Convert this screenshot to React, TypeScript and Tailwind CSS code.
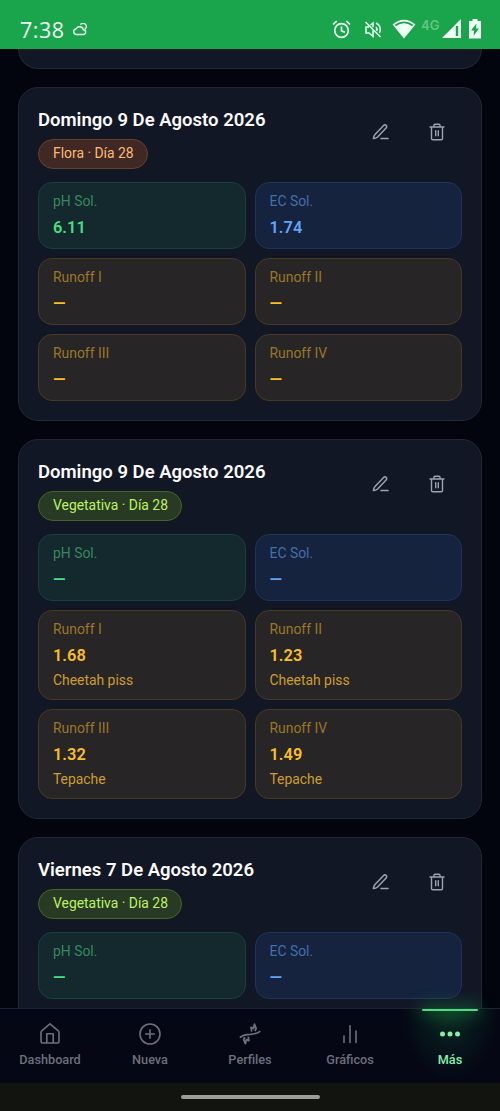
import React from "react";

type Tone = "green" | "blue" | "amber";
type Metric = { label: string; value: string; tone: Tone; note?: string };

const tones: Record<Tone, { box: string; label: string; value: string; note: string }> = {
  green: { box: "bg-[#13292d] border-[#184039]", label: "text-[#36885a]", value: "text-[#4ade80]", note: "" },
  blue: { box: "bg-[#15233e] border-[#1c3557]", label: "text-[#426faa]", value: "text-[#60a5fa]", note: "" },
  amber: { box: "bg-[#272525] border-[#4a3820]", label: "text-[#9a772a]", value: "text-[#fbbf24]", note: "text-[#cc9d34]" },
};

function Cell({ m }: { m: Metric }) {
  const t = tones[m.tone];
  return (
    <div className={`rounded-[14px] border pl-[14px] pt-[8px] ${m.note ? "h-[90px]" : "h-[67px]"} ${t.box}`}>
      <div className={`text-[13.9px] leading-[20px] ${t.label}`}>{m.label}</div>
      <div className={`mt-[4px] text-[16.4px] font-semibold leading-[25px] ${t.value}`}>{m.value}</div>
      {m.note && <div className={`mt-[2px] text-[13.9px] leading-[20px] ${t.note}`}>{m.note}</div>}
    </div>
  );
}

function Entry({ title, stage, metrics }: { title: string; stage: "Flora" | "Vegetativa"; metrics: Metric[] }) {
  const badge = stage === "Flora" ? "bg-[#402825] border-[#694027] text-[#fdba74]" : "bg-[#283a23] border-[#466426] text-[#bef264]";
  return (
    <article className="min-h-[240px] shrink-0 rounded-[20px] border border-[#222735] bg-[#121726] px-[19px] pb-[19px] pt-[18px]">
      <header className="flex h-[76px] justify-between">
        <div>
          <h2 className="text-[18.53px] font-semibold leading-[28px] text-[#fafafa]">{title}</h2>
          <span className={`mt-[5px] flex h-[30px] w-fit items-center rounded-full border pb-[2px] pl-[14px] pr-[13px] text-[13.9px] leading-[20px] whitespace-pre ${badge}`}>{`${stage} · Día 28`}</span>
        </div>
        <div className="flex h-[51px] items-center gap-[38px] pr-[16px] text-[#9ca3af]">
          <button aria-label="Editar">
            <svg width="18" height="18" viewBox="0 0 18 18" fill="none" stroke="currentColor" strokeWidth="1.5" strokeLinecap="round" strokeLinejoin="round">
              <path d="M11.6 2.4a1.7 1.7 0 0 1 2.5 0 1.7 1.7 0 0 1 0 2.5L5.6 14c-1 .9-2.4 1.5-4.2 1.6.1-1.8.7-3.2 1.6-4.2ZM9 15.6h7" />
            </svg>
          </button>
          <button aria-label="Eliminar">
            <svg width="18" height="18" viewBox="0 0 18 18" fill="none" stroke="currentColor" strokeWidth="1.4" strokeLinecap="round" strokeLinejoin="round">
              <path d="M2 4h14M3.5 4v11.4c0 .9.4 1.3 1.3 1.3h8.4c.9 0 1.3-.4 1.3-1.3V4M6 4V2.2c0-.6.4-1 1-1h4c.6 0 1 .4 1 1V4M7.7 7.8v5M10.3 7.8v5" />
            </svg>
          </button>
        </div>
      </header>
      <div className="grid grid-cols-2 gap-[9px]">
        {metrics.map((m) => <Cell key={m.label} m={m} />)}
      </div>
    </article>
  );
}

const sol = (ph: string, ec: string): Metric[] => [
  { label: "pH Sol.", value: ph, tone: "green" },
  { label: "EC Sol.", value: ec, tone: "blue" },
];

const runoffs = (values: string[], notes: string[] = []): Metric[] =>
  ["I", "II", "III", "IV"].map((n, i) => ({ label: `Runoff ${n}`, value: values[i], note: notes[i], tone: "amber" }));

function StatusBar() {
  return (
    <div className="flex h-[49px] shrink-0 items-center bg-[#1aa54c] pt-[10px] text-[#effff4]">
      <span className="ml-[20px] w-[45px] font-['Open_Sans',sans-serif] text-[21.5px] leading-[24px] tracking-[0.5px]">7:38</span>
      <svg className="ml-[7px]" width="16" height="14" viewBox="0 0 16 14" fill="none" stroke="currentColor" strokeWidth="1.4">
        <path d="M4 11.5h7.2a2.4 2.4 0 0 0 .1-4.8A3.8 3.8 0 0 0 4.2 5.8 2.9 2.9 0 0 0 4 11.5ZM8.5 1.7a3.2 3.2 0 1 1 4.4 4.5" />
      </svg>
      <div className="ml-auto flex h-[24px] items-center pr-[19px]">
        <svg width="19" height="20" viewBox="0 0 19 20" fill="none" stroke="currentColor" strokeWidth="1.7">
          <circle cx="9.5" cy="10.5" r="6.8" /><path d="M9.5 6.5v4.4l3.4 1.3M1 4.3 4.7 1.2M18 4.3l-3.7-3.1" />
        </svg>
        <svg className="ml-[13px]" width="19" height="20" viewBox="0 0 19 20" fill="none" stroke="currentColor" strokeWidth="1.5">
          <path d="M1.5 2l15 15M5 7H2v6h3l4 3.4V10.5M6.5 5 9 3V7M12 7a4 4 0 0 1 .8 4M12 3a7.2 7.2 0 0 1 3.5 10" />
        </svg>
        <svg className="-mt-[2px] ml-[9px]" width="24" height="20" viewBox="0 0 24 20">
          <path d="M12 19.5.6 5.4C7.5-.9 16.5-.9 23.4 5.4Z" fill="currentColor" />
          <path d="M3.3 6.6C8.8 2.6 15.2 2.6 20.7 6.6" fill="none" stroke="#1aa54c" strokeWidth="1.8" />
        </svg>
        <span className="-mt-[8px] ml-[5px] w-[20px] font-[Inter,sans-serif] text-[13px] font-semibold leading-none text-[#62c581]">4G</span>
        <svg className="-mt-[1px] ml-[1px]" width="19" height="20" viewBox="0 0 19 20">
          <path d="M19 0v19H0Z" fill="currentColor" /><path d="M13.8 7h2.4v10h-2.4Z" fill="#1aa54c" />
        </svg>
        <svg className="-mt-[1px] ml-[8px]" width="12" height="20" viewBox="0 0 12 20">
          <path d="M3.5 0h5v2H12v17.5H0V2h3.5Z" fill="currentColor" /><path d="M7.5 4.5 2 11.5h3.2L4.5 17l5.5-7.5H7Z" fill="#1aa54c" />
        </svg>
      </div>
    </div>
  );
}

const icons: Record<string, React.ReactNode> = {
  Dashboard: <path d="M3 10.3v9.2c0 1 .6 1.5 1.5 1.5h15c.9 0 1.5-.5 1.5-1.5v-9.2c0-.6-.2-1-.7-1.4L12 1.8 3.7 8.9c-.5.4-.7.8-.7 1.4ZM8.8 21v-9.2h6.4V21" />,
  Nueva: <><circle cx="12" cy="12" r="10" /><path d="M12 7.7v8.6M7.7 12h8.6" /></>,
  Perfiles: <path strokeWidth="1.8" d="M2.4 15.2c2.6-2.2 5.8-2.8 9.6-2.9 3.8-.2 7-.7 9.7-2.7M13.6 8.8l-.6-3.4 2.4 1.1 1.1-4.3 1.6 4.2-.8 2M10.3 15.4l.6 3.3-2.5-1-1.1 4-1.6-4 .8-1.9" />,
  Gráficos: <path d="M6 14v6.5M12 3.8v16.7M18 9v11.5" />,
  Más: <g fill="currentColor" stroke="none"><circle cx="4.5" cy="12" r="2.5" /><circle cx="12" cy="12" r="2.5" /><circle cx="19.5" cy="12" r="2.5" /></g>,
};

function Navigation() {
  return (
    <nav className="relative flex h-[75px] shrink-0 border-t border-[#1b2531] bg-[#050714]">
      {Object.entries(icons).map(([label, icon]) => (
        <a key={label} className={`relative flex w-1/5 flex-col items-center pt-[13px] ${label === "Más" ? "bg-[radial-gradient(ellipse_at_top,#0b3022_0%,#07171c_35%,#050714_70%)] text-[#86efac]" : "text-[#6d707c]"}`}>
          {label === "Más" && <span className="absolute top-0 h-[2px] w-[56px] rounded-full bg-[#4ade80] shadow-[0_0_16px_2px_#16803d]" />}
          <svg className="relative" width="24" height="24" viewBox="0 0 24 24" fill="none" stroke="currentColor" strokeWidth="1.6" strokeLinecap="round" strokeLinejoin="round">{icon}</svg>
          <span className="mt-[4px] text-[12.7px] font-medium leading-[20px]">{label}</span>
        </a>
      ))}
    </nav>
  );
}

export default function App() {
  const dash = "—";
  return (
    <div className="flex h-[1111px] w-[500px] flex-col overflow-hidden bg-[#02040e] font-[Roboto,sans-serif]">
      <StatusBar />
      <main className="flex min-h-0 flex-1 flex-col gap-[18px] overflow-hidden px-[18px]">
        <div className="h-[20px] shrink-0 rounded-b-[20px] border border-t-0 border-[#222735] bg-[#121726]" />
        <Entry title="Domingo 9 De Agosto 2026" stage="Flora" metrics={[...sol("6.11", "1.74"), ...runoffs([dash, dash, dash, dash])]} />
        <Entry title="Domingo 9 De Agosto 2026" stage="Vegetativa" metrics={[...sol(dash, dash), ...runoffs(["1.68", "1.23", "1.32", "1.49"], ["Cheetah piss", "Cheetah piss", "Tepache", "Tepache"])]} />
        <Entry title="Viernes 7 De Agosto 2026" stage="Vegetativa" metrics={sol(dash, dash)} />
      </main>
      <Navigation />
      <div className="flex h-[28px] shrink-0 justify-center bg-[#11140f] pt-[12px]"><div className="h-[4px] w-[139px] rounded-full bg-[#9b9d99]" /></div>
    </div>
  );
}
